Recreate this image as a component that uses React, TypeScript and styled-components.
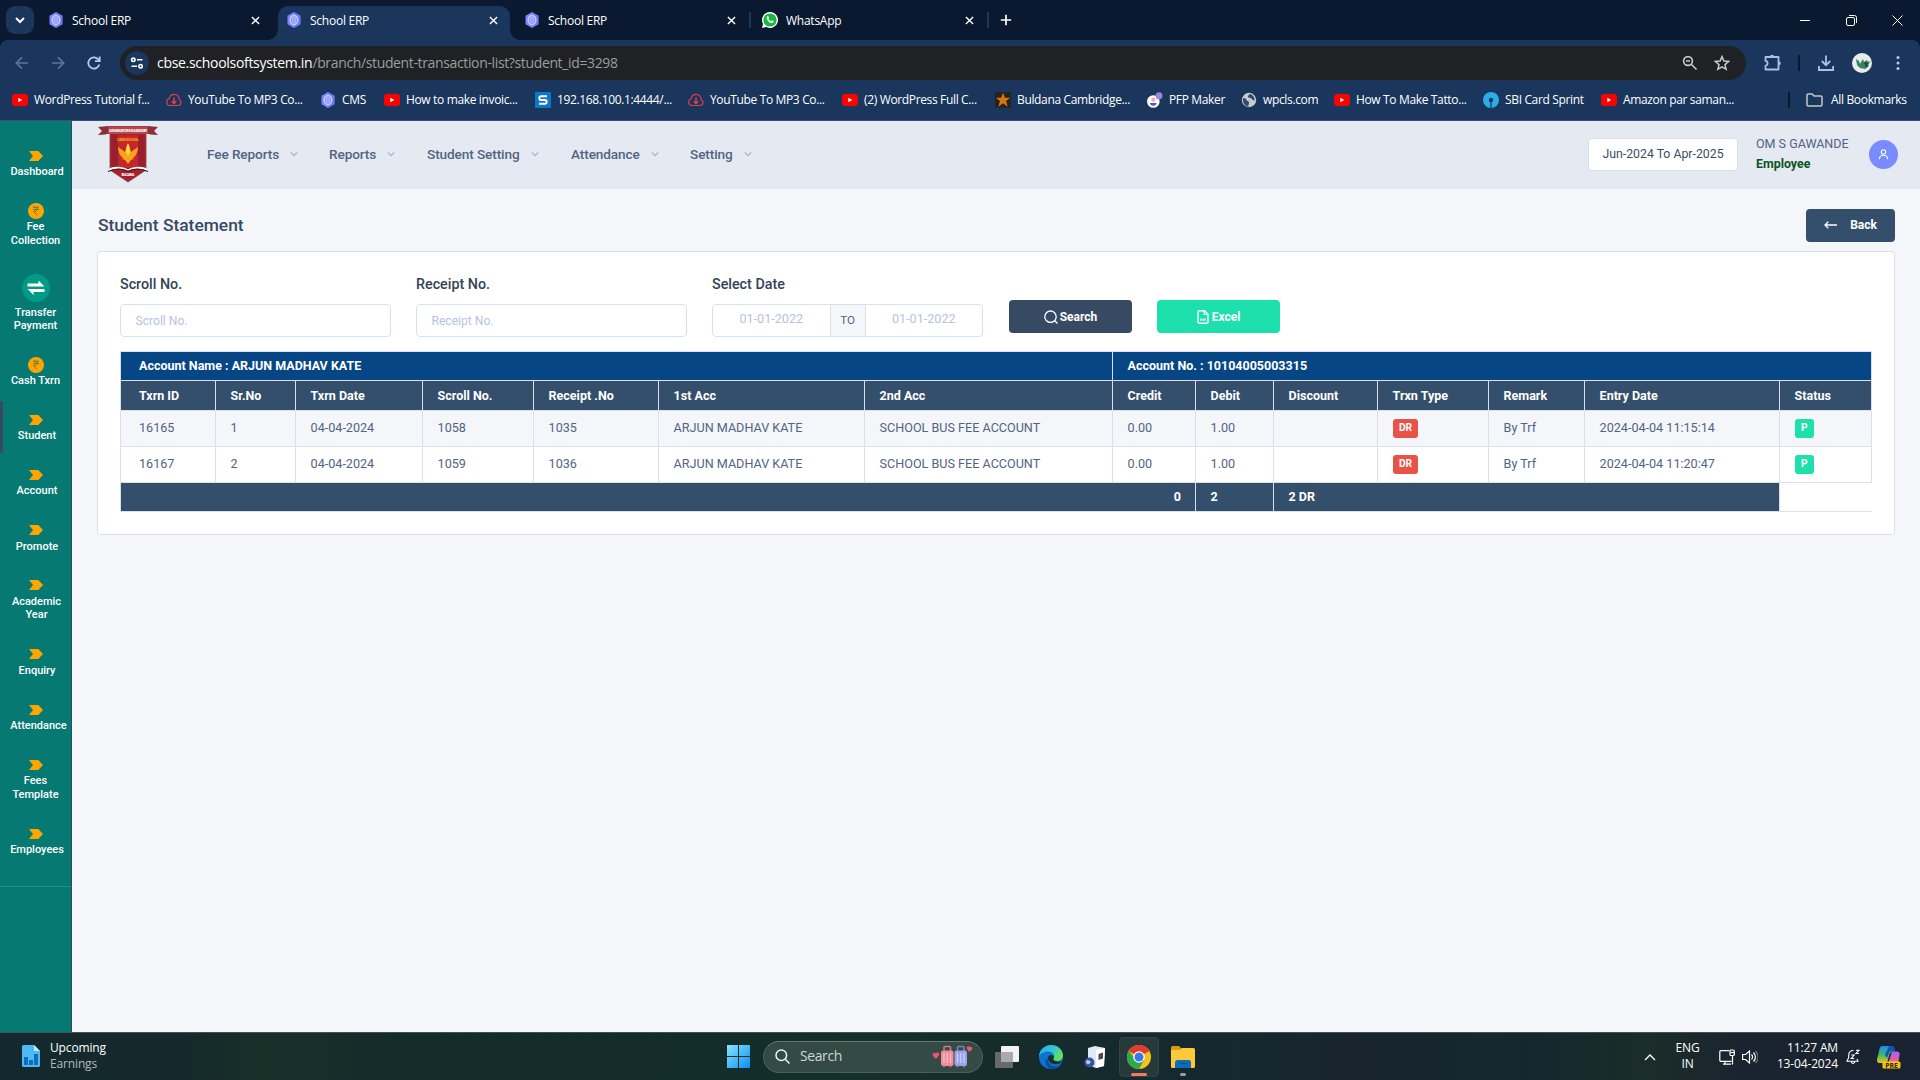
import React from "react";
import styled, { createGlobalStyle } from "styled-components";

const ui = `"Open Sans", "Noto Sans", sans-serif`;
const page = `Roboto, "Liberation Sans", sans-serif`;

const Global = createGlobalStyle`
  *, *::before, *::after { box-sizing: border-box; }
  html, body { margin: 0; padding: 0; background: #f5f6fa; }
  svg { display: block; flex: none; }
`;

const Screen = styled.div`
  width: 1920px;
  height: 1080px;
  display: flex;
  flex-direction: column;
  overflow: hidden;
  font-family: ${page};
`;

/* ---------- browser chrome ---------- */

const TabStrip = styled.div`
  flex: none;
  height: 40px;
  display: flex;
  align-items: flex-end;
  background: #0a1930;
  padding-left: 6px;
  font-family: ${ui};
`;

const TabSearch = styled.div`
  width: 28px;
  height: 28px;
  margin: 0 6px 6px 0;
  border-radius: 9px;
  background: #1a365d;
  display: grid;
  place-items: center;
`;

const Tab = styled.div<{ $active?: boolean; $divider?: boolean }>`
  position: relative;
  width: 238px;
  height: 34px;
  display: flex;
  align-items: center;
  padding: 0 18px 0 8px;
  color: #fff;

  &::before {
    content: "";
    position: absolute;
    inset: 0 6px 0 0;
    border-radius: 10px 10px 0 0;
    background: ${(p) => (p.$active ? "#1a365d" : "transparent")};
  }
  &::after {
    content: "";
    display: ${(p) => (p.$divider ? "block" : "none")};
    position: absolute;
    right: 3px;
    top: 6px;
    width: 2px;
    height: 16px;
    background: #1a365d;
  }
`;

const TabFoot = styled.span<{ $side: "left" | "right" }>`
  position: absolute;
  bottom: 0;
  ${(p) => (p.$side === "left" ? "left: -10px;" : "right: -4px;")}
  width: 10px;
  height: 10px;
  background: radial-gradient(circle at ${(p) => (p.$side === "left" ? "0 0" : "100% 0")}, transparent 9.5px, #1a365d 10px);
`;

const TabInner = styled.div`
  position: relative;
  flex: 1;
  display: flex;
  align-items: center;
  gap: 8px;
  padding-bottom: 6px;
  height: 28px;
`;

const TabTitle = styled.span`
  flex: 1;
  font-size: 12px;
  letter-spacing: -0.25px;
  line-height: 16px;
  padding-top: 1px;
`;

const NewTab = styled.div`
  height: 34px;
  padding: 8px 0 0 8px;
`;

const WindowButtons = styled.div`
  margin-left: auto;
  height: 40px;
  display: flex;
  > div {
    width: 46px;
    display: grid;
    place-items: center;
  }
`;

const Toolbar = styled.div`
  flex: none;
  height: 46px;
  display: flex;
  align-items: center;
  padding-left: 14px;
  background: #0a1930;
  font-family: ${ui};
  position: relative;
  &::before {
    content: "";
    position: absolute;
    inset: 0;
    background: #1a365d;
    border-radius: 8px 8px 0 0;
  }
  > * { position: relative; }
`;

const NavButton = styled.div`
  flex: none;
  width: 36px;
`;

const Omnibox = styled.div`
  flex: none;
  width: 1626px;
  height: 34px;
  margin-left: -2px;
  border-radius: 17px;
  background: #202124;
  display: flex;
  align-items: center;
  padding: 0 16px 0 5px;
`;

const SiteInfo = styled.div`
  width: 24px;
  height: 24px;
  border-radius: 50%;
  background: #1a365d;
  display: grid;
  place-items: center;
  margin-right: 8px;
`;

const Url = styled.div`
  flex: 1;
  padding-bottom: 1px;
  font-size: 14px;
  letter-spacing: -0.36px;
  color: #9a9da1;
  b { font-weight: 400; color: #fff; letter-spacing: -0.3px; }
`;

const OmniIcons = styled.div`
  display: flex;
  gap: 16px;
`;

const Tools = styled.div`
  display: flex;
  align-items: center;
  margin-left: 18px;
`;

const Divider = styled.div`
  flex: none;
  width: 2px;
  height: 16px;
  background: #0a1930;
`;

const ToolDivider = styled(Divider)`
  margin: 0 18px 0 16px;
`;

const Profile = styled.div`
  flex: none;
  width: 20px;
  height: 20px;
  border-radius: 50%;
  overflow: hidden;
  margin: 0 24px 0 18px;
  background: #e8ecea;
`;

const Bookmarks = styled.div`
  flex: none;
  height: 35px;
  display: flex;
  padding: 6px 0 0 12px;
  background: #1a365d;
  border-bottom: 1px solid #34507a;
  color: #fff;
  font-family: ${ui};
`;

const Bookmark = styled.div<{ $w: number }>`
  flex: none;
  width: ${(p) => p.$w}px;
  height: 16px;
  display: flex;
  align-items: center;
  gap: 6px;
  white-space: nowrap;
`;

const BookmarkText = styled.span<{ $ls?: number }>`
  font-size: 12px;
  line-height: 16px;
  letter-spacing: ${(p) => p.$ls ?? -0.35}px;
`;

const AllBookmarks = styled.div`
  display: flex;
  align-items: center;
  height: 16px;
  margin-left: 55px;
  gap: 8px;
  white-space: nowrap;
  ${Divider} { margin-right: 8px; }
`;

/* ---------- application ---------- */

const Body = styled.div`
  flex: 1;
  min-height: 0;
  display: flex;
`;

const Sidebar = styled.nav`
  flex: none;
  width: 72px;
  padding-top: 30px;
  background: #067972;
  border-right: 1px solid #2c4a66;
  display: flex;
  flex-direction: column;
`;

const SideItem = styled.div<{ $h: number; $active?: boolean }>`
  position: relative;
  flex: none;
  height: ${(p) => p.$h}px;
  display: flex;
  flex-direction: column;
  align-items: center;
  &::before {
    content: "";
    display: ${(p) => (p.$active ? "block" : "none")};
    position: absolute;
    left: 0;
    top: -14px;
    width: 3px;
    height: 52px;
    background: #364a63;
    border-radius: 0 2px 2px 0;
  }
`;

const SideLabel = styled.div<{ $lh: number; $gap: number; $dx?: number }>`
  margin-top: ${(p) => p.$gap + 1}px;
  padding-left: ${(p) => p.$dx ?? 0}px;
  font-size: 11px;
  font-weight: 500;
  line-height: ${(p) => p.$lh}px;
  color: #fff;
  text-align: center;
  white-space: nowrap;
`;

const SideRule = styled.div`
  height: 1px;
  background: #2b8a86;
`;

const Main = styled.main`
  flex: 1;
  min-width: 0;
  background: #f5f6fa;
`;

const Header = styled.header`
  height: 68px;
  background: #e5e9f2;
  display: flex;
  align-items: center;
  padding: 0 22px 2px 26px;
`;

const Logo = styled.div``;

const Menu = styled.div`
  display: flex;
  margin-left: 49px;
`;

const MenuItem = styled.div<{ $w: number }>`
  width: ${(p) => p.$w}px;
  display: flex;
  align-items: center;
  gap: 11px;
  font-size: 13.6px;
  letter-spacing: -0.1px;
  font-weight: 500;
  color: #526484;
  white-space: nowrap;
`;

const Session = styled.div`
  margin-left: auto;
  width: 150px;
  height: 33px;
  border: 1px solid #dbdfea;
  border-radius: 4px;
  background: #fff;
  display: grid;
  place-items: center;
  font-size: 12.3px;
  color: #3c4d62;
`;

const User = styled.div`
  width: 113px;
  margin-left: 18px;
  padding-bottom: 1px;
  font-size: 12.5px;
  line-height: 20px;
  color: #526484;
  white-space: nowrap;
  strong { display: block; font-weight: 700; font-size: 12.4px; color: #0b5523; }
`;

const Avatar = styled.div`
  width: 29px;
  height: 29px;
  border-radius: 50%;
  background: #798bff;
  display: grid;
  place-items: center;
`;

const Content = styled.div`
  padding: 20px 25px 0;
`;

const TitleRow = styled.div`
  display: flex;
  justify-content: space-between;
  height: 42px;
`;

const Title = styled.h1`
  margin: 0;
  padding-left: 1px;
  font-size: 17.4px;
  line-height: 32px;
  font-weight: 500;
  color: #364a63;
`;

const Button = styled.div<{ $bg: string; $w: number; $gap: number; $up?: number }>`
  width: ${(p) => p.$w}px;
  height: 33px;
  border-radius: 4px;
  background: ${(p) => p.$bg};
  color: #fff;
  font-size: 12px;
  font-weight: 700;
  display: flex;
  align-items: center;
  justify-content: center;
  gap: ${(p) => p.$gap}px;
  padding-bottom: ${(p) => p.$up ?? 0}px;
`;

const Card = styled.section`
  width: 1798px;
  height: 284px;
  background: #fff;
  border: 1px solid #dbdfea;
  border-radius: 4px;
  padding: 22px;
`;

const Filters = styled.div`
  display: flex;
  height: 77px;
`;

const Field = styled.div`
  width: 271px;
  margin-right: 25px;
`;

const Label = styled.label`
  display: block;
  font-size: 14.3px;
  font-weight: 500;
  line-height: 20px;
  margin-bottom: 10px;
  color: #344357;
`;

const Input = styled.div`
  height: 33px;
  border: 1px solid #dbdfea;
  border-radius: 4px;
  padding: 0 14.5px;
  font-size: 12.1px;
  line-height: 32px;
  color: #b7c2e0;
`;

const DateRange = styled(Input)`
  display: flex;
  padding: 0;
  font-size: 12.6px;
  text-align: center;
  line-height: 28px;
  span { flex: 1; }
  em {
    font-style: normal;
    font-size: 11.6px;
    width: 36px;
    line-height: 31px;
    background: #f5f6fa;
    border: solid #dbdfea;
    border-width: 0 1px;
    color: #526484;
  }
`;

const Actions = styled.div`
  display: flex;
  gap: 25px;
  padding-top: 26px;
  margin-left: 1px;
`;

const Table = styled.table`
  width: 1752px;
  table-layout: fixed;
  border-collapse: separate;
  border-spacing: 0;
  border-top: 1px solid #dbdfea;
`;

const Cell = styled.td<{ $right?: boolean; $blank?: boolean }>`
  padding: 0 14px 1px 14.6px;
  border: solid #dbdfea;
  border-width: 0 1px 1px 0;
  text-align: ${(p) => (p.$right ? "right" : "left")};
  white-space: nowrap;
  &:first-child { padding-left: 18px; border-left-width: 1px; }
  ${(p) => p.$blank && "background: #fff; border-right-width: 0;"}
`;

const Row = styled.tr<{ $h: number; $bg?: string; $head?: boolean }>`
  height: ${(p) => p.$h}px;
  background: ${(p) => p.$bg ?? "#fff"};
  font-weight: ${(p) => (p.$head ? 700 : 400)};
  font-size: ${(p) => (p.$head ? 12.5 : 12.6)}px;
  color: ${(p) => (p.$head ? "#fff" : "#526484")};
  ${Cell} { padding-bottom: ${(p) => (p.$head ? 1 : 3)}px; }
`;

const Badge = styled.span<{ $bg: string }>`
  display: inline-block;
  height: 19px;
  padding: 0 6px;
  border-radius: 3px;
  background: ${(p) => p.$bg};
  color: #fff;
  font-size: 10.2px;
  font-weight: 700;
  line-height: 17px;
  vertical-align: middle;
  margin: 2px 0 0 0.4px;
`;

/* ---------- taskbar ---------- */

const Taskbar = styled.div`
  flex: none;
  height: 48px;
  display: flex;
  align-items: center;
  border-top: 1px solid #45524f;
  background: linear-gradient(90deg, #14292d 0, #15292c 180px, #182f28 260px, #142b2c 420px, #132d2b 700px, #152f28 900px, #15292e 1150px, #18252f 1350px, #15282c 1560px, #1b2d28 1640px, #1a2430 1740px, #192231 100%);
  color: #fff;
  font-family: ${ui};
  font-size: 12px;
  line-height: 16px;
`;

const Widget = styled.div`
  flex: none;
  width: 727px;
  display: flex;
  align-items: center;
  gap: 10px;
  padding: 0 0 1px 22px;
  letter-spacing: -0.15px;
  small { display: block; font-size: 12px; color: #b3babb; }
`;

const SearchBox = styled.div`
  width: 220px;
  height: 32px;
  margin-left: 13px;
  border-radius: 16px;
  border: 1px solid #4b5f5a;
  border-top-color: #667671;
  background: #344a45;
  display: flex;
  align-items: center;
  padding: 0 9px 0 11px;
  color: #cfd6d4;
  font-size: 14px;
  letter-spacing: -0.4px;
  span { flex: 1; padding: 0 0 1px 10px; }
`;

const Apps = styled.div`
  display: flex;
  align-items: center;
  margin-left: 2px;
`;

const AppButton = styled.div<{ $open?: boolean; $mark?: string; $mw?: number }>`
  position: relative;
  width: 40px;
  height: 40px;
  margin: 0 2px;
  display: grid;
  place-items: center;
  border-radius: 4px;
  background: ${(p) => (p.$open ? "#263a3b" : "transparent")};
  border: 1px solid ${(p) => (p.$open ? "#2f4344" : "transparent")};
  &::after {
    content: "";
    position: absolute;
    bottom: 0;
    left: 50%;
    width: ${(p) => p.$mw ?? 0}px;
    height: 3px;
    border-radius: 2px;
    transform: translateX(-50%);
    background: ${(p) => p.$mark ?? "transparent"};
  }
`;

const Tray = styled.div`
  margin-left: auto;
  display: flex;
  align-items: center;
  padding-right: 19px;
`;

const TrayText = styled.div<{ $w: number; $right?: boolean }>`
  width: ${(p) => p.$w}px;
  text-align: ${(p) => (p.$right ? "right" : "center")};
  letter-spacing: -0.15px;
  padding-bottom: 1px;
`;

const TrayIcon = styled.div<{ $before: number }>`
  margin-left: ${(p) => p.$before}px;
`;

/* ---------- icons ---------- */

const Gem = () => (
  <svg width="16" height="16" viewBox="0 0 16 16">
    <path d="M8 0l6.500 3.800v8.400L8 16l-6.500-3.800V3.800z" fill="#7b86fb" />
    <path d="M8 0l6.500 3.800v8.400L8 16z" fill="#5f6af0" opacity=".5" />
    <ellipse cx="8" cy="8" rx="4.600" ry="5.400" fill="#c3c9ff" />
    <path d="M5.600 11V7a2.400 2.400 0 014.800 0v4M7.200 12V7.200a.8.8 0 011.600 0V12" fill="none" stroke="#7580f6" strokeWidth=".8" />
  </svg>
);

const YouTube = () => (
  <svg width="16" height="16" viewBox="0 0 16 16">
    <rect x="0" y="2" width="16" height="12" rx="3" fill="#f00" />
    <path d="M6.300 5.700v4.600L10.300 8z" fill="#fff" />
  </svg>
);

const CloudDown = () => (
  <svg width="16" height="16" viewBox="0 0 16 16" fill="none" stroke="#e23d4c" strokeWidth="1.200">
    <path d="M4 13.500h8a3 3 0 003-3c0-1.500-.7-2.400-1.800-2.800C13.400 4.500 11 2.300 8.300 2.300S3.600 4 3.300 6.500C1.700 7 .8 8.300.8 10A3.400 3.400 0 004 13.500z" />
    <path d="M8 5.500v6M5.800 9.300L8 11.600l2.200-2.300" strokeWidth="1.500" />
  </svg>
);

const SBox = () => (
  <svg width="16" height="16" viewBox="0 0 16 16">
    <rect width="16" height="16" fill="#0b77c5" />
    <path d="M12 4.200H6a1.600 1.600 0 00-1.600 1.600v.6A1.600 1.600 0 006 8h4a1.600 1.600 0 011.600 1.600v.6a1.600 1.600 0 01-1.600 1.600H4" fill="none" stroke="#fff" strokeWidth="2" />
  </svg>
);

const StarBox = () => (
  <svg width="16" height="16" viewBox="0 0 16 16">
    <rect width="16" height="16" fill="#262422" />
    <path d="M8 .8l1.900 5h5.300L11 9l1.700 5.700L8 11.300l-4.700 3.400L5 9 .8 5.800h5.300z" fill="#d8760a" />
  </svg>
);

const Pfp = () => (
  <svg width="16" height="16" viewBox="0 0 16 16">
    <circle cx="6.300" cy="9.500" r="6.300" fill="#fff" />
    <circle cx="12" cy="3.700" r="3.500" fill="#9a84dc" />
    <circle cx="6.300" cy="7.700" r="2.100" fill="#f6a5b0" />
    <path d="M3 11h6.600a3.300 2.800 0 01-6.600 0z" fill="#5b50e6" />
  </svg>
);

const Globe = () => (
  <svg width="16" height="16" viewBox="0 0 16 16">
    <circle cx="8" cy="8" r="7.200" fill="#c6cbd0" />
    <path d="M2 6.500c2-.5 3 .2 3.500 1.500s2 1 2.500 2-1 2.500-.5 4.500C4 14 1.500 11 2 6.500zM8.500 2c-.5 1.500-2 1.500-1.500 3s2.500.5 3.500 1.500 1 2 3 2c.5-2-1-6-5-6.500z" fill="#31486b" />
  </svg>
);

const Sbi = () => (
  <svg width="16" height="16" viewBox="0 0 16 16">
    <circle cx="8" cy="8" r="8" fill="#2aace6" />
    <circle cx="8" cy="8" r="2.200" fill="#1a365d" />
    <path d="M7.400 9h1.200v7H7.400z" fill="#1a365d" />
  </svg>
);

const WhatsApp = () => (
  <svg width="16" height="16" viewBox="0 0 16 16">
    <path d="M8 0a8 8 0 11-3.700 15.100L0 16l1-4.100A8 8 0 018 0z" fill="#fff" />
    <circle cx="8" cy="8" r="6.600" fill="#16b83e" />
    <path d="M5.300 4.300c.5-.5 1-.3 1.200.2l.5 1.200c0 .5-.7.8-.6 1.100.5 1.100 1.400 1.900 2.500 2.400.4 0 .8-1 1.200-.9l1.400.8c.5.300.2 1.300-.5 1.700-1.300.7-3.200 0-4.600-1.400S4 5.700 5.300 4.300z" fill="#fff" />
  </svg>
);

const Close = () => (
  <svg width="9" height="9" viewBox="0 0 9 9" stroke="#fff" strokeWidth="1.400">
    <path d="M.9.9l7.200 7.200M8.100.9L.9 8.100" />
  </svg>
);

const Chev = ({ c = "#9fb0cc", w = 8, s = 1.1 }: { c?: string; w?: number; s?: number }) => (
  <svg width={w} height={w} viewBox="0 0 8 8" fill="none" stroke={c} strokeWidth={s}>
    <path d="M.8 2.400L4 5.600l3.200-3.200" />
  </svg>
);

const Arrow = ({ flip }: { flip?: boolean }) => (
  <svg width="16" height="16" viewBox="0 0 16 16" fill="none" stroke="#5f7699" strokeWidth="1.700">
    {flip ? <path d="M2 8h11.500M8 2.300L13.700 8 8 13.700" /> : <path d="M14 8H2.500M8 2.300L2.300 8 8 13.700" />}
  </svg>
);

const Pointer = () => (
  <svg width="14" height="10" viewBox="0 0 14 10">
    <path d="M0 0h9.300L14 5l-4.700 5H0l4-5z" fill="#ffa500" />
  </svg>
);

const Coin = () => (
  <svg width="16" height="16" viewBox="0 0 16 16">
    <circle cx="8" cy="8" r="8" fill="#ffa500" />
    <path d="M5.200 4.200h5.800M5.200 6.400h5.800M5.200 4.200h1.700c3 0 3 4.200 0 4.200H5.400L9.300 12.300" fill="none" stroke="#5f7d4e" strokeWidth="1" />
  </svg>
);

const Transfer = () => (
  <svg width="28" height="28" viewBox="0 0 28 28">
    <circle cx="14" cy="14" r="14" fill="#009b86" />
    <path d="M5.500 9.500h11V6.500l6 6h-17zM22.500 18h-11v3l-6-6h17z" fill="#fff" />
  </svg>
);

const Crest = () => (
  <svg width="60" height="57" viewBox="0 0 60 57">
    <path d="M12 7h36v37L30 56 12 44z" fill="#a81f2a" stroke="#7a4a46" strokeWidth=".8" />
    <path d="M14 9h32v33H14z" fill="#c4262f" />
    <path d="M14 9h6v33h-6zM40 9h6v33h-6z" fill="#98202a" />
    <path d="M0 1l10-1h40l10 1-4 4 4 4-8-.5V8H8v.5L0 9l4-4z" fill="#8d2f37" />
    <path d="M10 .5h40V8H10z" fill="#b5494c" />
    <text x="30" y="5.800" textAnchor="middle" fontSize="4.200" fontWeight="700" fill="#fff" textLength="38" fontFamily="Roboto">SANSKAR DNYA MANDIR</text>
    <text x="30" y="15.200" textAnchor="middle" fontSize="4.400" fontWeight="700" fill="#f6a21a" textLength="22" fontFamily="Roboto">CBSE SCHOOL</text>
    <path d="M20 21l7 5 1.500-5 1.500-4 1.500 4 1.500 5 7-5c-.5 7-3 10-6 11.500h3l-4 1.500-3 4-3-4-4-1.500h3c-3-1.500-5.500-4.500-6-11.500z" fill="#f9a51c" />
    <path d="M29 18.500h2l1 7-2 5-2-5z" fill="#ffd93c" />
    <path d="M10 45c7-3.500 15-3.500 20 0 5-3.500 13-3.500 20 0l-2-3c-6-2-13-1.500-18 1.500C25 40.500 18 40 12 42z" fill="#fff" />
    <path d="M10 45.500c7-3 15-3 20 0 5-3 13-3 20 0" fill="none" stroke="#222" strokeWidth="1.200" />
    <text x="30" y="50.300" textAnchor="middle" fontSize="3.600" fontWeight="700" fill="#fff" textLength="13" fontFamily="Roboto">BULDANA</text>
  </svg>
);

const Edge = () => (
  <svg width="24" height="24" viewBox="0 0 24 24">
    <defs>
      <linearGradient id="edgeTop" x1="0" y1="0" x2="1" y2=".6">
        <stop offset="0" stopColor="#2aa8e8" />
        <stop offset=".6" stopColor="#35c9c9" />
        <stop offset="1" stopColor="#6be04e" />
      </linearGradient>
    </defs>
    <circle cx="12" cy="12" r="12" fill="#0f73cf" />
    <path d="M0 11C1 4 6 0 12 0c7 0 12 5 12 10.500 0 3.500-2.500 5.500-5.500 5.500-3 0-4.500-1-4.500-2s1-1.500 1-3c0-2.500-2.500-4.500-6-4.500S1.500 8 0 11z" fill="url(#edgeTop)" />
    <path d="M8.500 13c-.5 5 4 9 9 8.500 2-.2 3.500-1.200 4.700-2.300C20 22.500 16.500 24 13 24 8 23 6 19 6.500 15.500c.2-1.500 1-2 2-2.500z" fill="#0b4f9e" />
    <path d="M9 13c0-2 1.500-3 3-3 2 0 3 1 3 2 0 .8-.7 1-.7 2 0 1.500 2 2.500 4.500 2.500 1.500 0 2.700-.4 3.700-1-.3 1-.6 2-1 2.500C15 21 9 18 9 13z" fill="#14332d" />
  </svg>
);

const Chrome = () => (
  <svg width="24" height="24" viewBox="0 0 24 24">
    <circle cx="12" cy="12" r="12" fill="#fbc116" />
    <path d="M12 12L1.600 6A12 12 0 0122.400 6z" fill="#e33b2e" />
    <path d="M1.600 6A12 12 0 0012 24l5.200-9L12 12H6.800z" fill="#2da94f" />
    <circle cx="12" cy="12" r="5.800" fill="#fff" />
    <circle cx="12" cy="12" r="4.500" fill="#3b78e7" />
  </svg>
);

const Bags = () => (
  <svg width="41" height="24" viewBox="0 0 41 24">
    <g fill="none" strokeWidth="1.600">
      <path d="M12 6V2.500a1 1 0 011-1h4.500a1 1 0 011 1V6" stroke="#d47788" />
      <path d="M25.500 6V2.500a1 1 0 011-1H31a1 1 0 011 1V6" stroke="#7d83b8" />
    </g>
    <rect x="9" y="5.500" width="12.500" height="15.500" rx="2" fill="#f58a98" />
    <rect x="22.500" y="5.500" width="12.500" height="15.500" rx="2" fill="#9aa2ee" />
    <path d="M12 8v10M15.200 8v10M18.500 8v10" stroke="#fcc3c4" strokeWidth="1.200" />
    <path d="M25.500 8v10M28.700 8v10M32 8v10" stroke="#ccd1ff" strokeWidth="1.200" />
    <path d="M11 21.500h2M17.500 21.500h2M24.500 21.500h2M31 21.500h2" stroke="#8b7d92" strokeWidth="1.500" />
    <path d="M4 14L.8 10.800a2 2 0 013-2.500 2 2 0 013.400 2z" fill="#f0507a" />
    <path d="M37 7l-2-3a1.700 1.700 0 012.800-2 1.700 1.700 0 012.200 2.500z" fill="#f0507a" />
  </svg>
);

/* ---------- data ---------- */

const bookmarks: [React.FC, string, number][] = [
  [YouTube, "WordPress Tutorial f...", 154],
  [CloudDown, "YouTube To MP3 Co...", 154],
  [Gem, "CMS", 64],
  [YouTube, "How to make invoic...", 151],
  [SBox, "192.168.100.1:4444/...", 153],
  [CloudDown, "YouTube To MP3 Co...", 154],
  [YouTube, "(2) WordPress Full C...", 153],
  [StarBox, "Buldana Cambridge...", 152],
  [Pfp, "PFP Maker", 94],
  [Globe, "wpcls.com", 93],
  [YouTube, "How To Make Tatto...", 149],
  [Sbi, "SBI Card Sprint", 118],
  [YouTube, "Amazon par saman...", 132],
];

type Side = { icon: React.FC; lines: string[]; h: number; gap: number; lh: number; dx?: number; active?: boolean };
const side: Side[] = [
  { icon: Pointer, lines: ["Dashboard"], h: 52, gap: 3, lh: 14, dx: 3 },
  { icon: Coin, lines: ["Fee", "Collection"], h: 71, gap: 0, lh: 14 },
  { icon: Transfer, lines: ["Transfer", "Payment"], h: 83, gap: 3, lh: 13 },
  { icon: Coin, lines: ["Cash Txrn"], h: 58, gap: 0, lh: 14 },
  { icon: Pointer, lines: ["Student"], h: 55, gap: 3, lh: 14, dx: 3, active: true },
  { icon: Pointer, lines: ["Account"], h: 55, gap: 3, lh: 14, dx: 3 },
  { icon: Pointer, lines: ["Promote"], h: 55, gap: 4, lh: 14, dx: 3 },
  { icon: Pointer, lines: ["Academic", "Year"], h: 69, gap: 4, lh: 13, dx: 2 },
  { icon: Pointer, lines: ["Enquiry"], h: 56, gap: 4, lh: 14, dx: 3 },
  { icon: Pointer, lines: ["Attendance"], h: 55, gap: 3, lh: 14, dx: 6 },
  { icon: Pointer, lines: ["Fees", "Template"], h: 69, gap: 3, lh: 14 },
  { icon: Pointer, lines: ["Employees"], h: 57, gap: 3, lh: 14, dx: 3 },
];

const menu: [string, number][] = [
  ["Fee Reports", 122],
  ["Reports", 98],
  ["Student Setting", 144],
  ["Attendance", 119],
  ["Setting", 80],
];

const colWidths = [96, 80, 127, 111, 125, 206, 248, 83, 78, 104, 111, 96, 195, 92];
const heads = ["Txrn ID", "Sr.No", "Txrn Date", "Scroll No.", "Receipt .No", "1st Acc", "2nd Acc", "Credit", "Debit", "Discount", "Trxn Type", "Remark", "Entry Date", "Status"];
const rows = [
  ["16165", "1", "04-04-2024", "1058", "1035", "ARJUN MADHAV KATE", "SCHOOL BUS FEE ACCOUNT", "0.00", "1.00", "", "DR", "By Trf", "2024-04-04 11:15:14", "P"],
  ["16167", "2", "04-04-2024", "1059", "1036", "ARJUN MADHAV KATE", "SCHOOL BUS FEE ACCOUNT", "0.00", "1.00", "", "DR", "By Trf", "2024-04-04 11:20:47", "P"],
];

export default function App() {
  return (
    <Screen>
      <Global />
      <TabStrip>
        <TabSearch><Chev c="#fff" w={10} s={1.6} /></TabSearch>
        <Tab><TabInner><Gem /><TabTitle>School ERP</TabTitle><Close /></TabInner></Tab>
        <Tab $active>
          <TabFoot $side="left" /><TabFoot $side="right" />
          <TabInner><Gem /><TabTitle>School ERP</TabTitle><Close /></TabInner>
        </Tab>
        <Tab $divider><TabInner><Gem /><TabTitle>School ERP</TabTitle><Close /></TabInner></Tab>
        <Tab $divider><TabInner><WhatsApp /><TabTitle>WhatsApp</TabTitle><Close /></TabInner></Tab>
        <NewTab>
          <svg width="12" height="12" viewBox="0 0 12 12" stroke="#fff" strokeWidth="1.700"><path d="M6 .8v10.400M.8 6h10.400" /></svg>
        </NewTab>
        <WindowButtons>
          <div><svg width="10" height="10" viewBox="0 0 10 10" stroke="#fff"><path d="M0 5.500h10" /></svg></div>
          <div>
            <svg width="11" height="11" viewBox="0 0 11 11" fill="none" stroke="#fff">
              <rect x=".5" y="2.500" width="8" height="8" rx="1.500" /><path d="M3 .5h5.500a2 2 0 012 2V8" />
            </svg>
          </div>
          <div><svg width="11" height="11" viewBox="0 0 11 11" stroke="#fff"><path d="M.5.5l10 10M10.500.5l-10 10" /></svg></div>
        </WindowButtons>
      </TabStrip>

      <Toolbar>
        <NavButton><Arrow /></NavButton>
        <NavButton><Arrow flip /></NavButton>
        <NavButton>
          <svg width="16" height="16" viewBox="0 0 16 16" fill="none" stroke="#b7cdf0" strokeWidth="1.800">
            <path d="M13.300 9.500A5.600 5.600 0 1112 4.200L13.500 5.800" /><path d="M13.700 1.500v4.600H9" />
          </svg>
        </NavButton>
        <Omnibox>
          <SiteInfo>
            <svg width="14" height="14" viewBox="0 0 14 14" fill="none" stroke="#fff" strokeWidth="1.600">
              <circle cx="3.300" cy="3.800" r="1.700" /><path d="M7 3.800h5.500M1.500 10.200H7" /><circle cx="10.600" cy="10.200" r="1.700" />
            </svg>
          </SiteInfo>
          <Url><b>cbse.schoolsoftsystem.in</b>/branch/student-transaction-list?student_id=3298</Url>
          <OmniIcons>
            <svg width="16" height="16" viewBox="0 0 16 16" fill="none" stroke="#c7c9cc" strokeWidth="1.600">
              <circle cx="6" cy="6" r="4.400" /><path d="M9.300 9.300l5.200 5.200M4 6h4" />
            </svg>
            <svg width="16" height="16" viewBox="0 0 16 16" fill="none" stroke="#c7c9cc" strokeWidth="1.500">
              <path d="M8 1.600l1.900 4.500 4.700.4L11 9.600l1.100 4.700L8 11.800l-4.100 2.500L5 9.600 1.400 6.500l4.700-.4z" />
            </svg>
          </OmniIcons>
        </Omnibox>
        <Tools>
          <svg width="18" height="18" viewBox="0 0 18 18" fill="none" stroke="#a9c1ea" strokeWidth="1.800">
            <path d="M1.500 3H14.500V15.500H1.500V11.800C4.300 11.400 4.300 7.200 1.500 6.800z" strokeLinejoin="round" />
            <path d="M5.900 2.800a2.100 2.100 0 014.200 0zM14.700 7.200a2.100 2.100 0 010 4.200z" fill="#a9c1ea" stroke="none" />
          </svg>
          <ToolDivider />
          <svg width="16" height="16" viewBox="0 0 16 16" fill="none" stroke="#a9c1ea" strokeWidth="1.800">
            <path d="M8 .5v9.500M3.800 6L8 10.200 12.200 6M.9 11v4h14.200v-4" />
          </svg>
          <Profile>
            <svg width="20" height="20" viewBox="0 0 20 20">
              <path d="M4 6l3 2 1 3 1-2 2-3 1 3 3-2 1 2 3-1-3 3 1 2-4 3-5-1-3-3z" fill="#3d7f60" />
              <path d="M12 9l5 1-3 5z" fill="#1f4a38" />
            </svg>
          </Profile>
          <svg width="4" height="16" viewBox="0 0 4 16" fill="#b7cdf0"><circle cx="2" cy="2.500" r="1.500" /><circle cx="2" cy="8" r="1.500" /><circle cx="2" cy="13.500" r="1.500" /></svg>
        </Tools>
      </Toolbar>

      <Bookmarks>
        {bookmarks.map(([Icon, text, w], i) => (
          <Bookmark key={i} $w={w}><Icon /><BookmarkText>{text}</BookmarkText></Bookmark>
        ))}
        <AllBookmarks>
          <Divider />
          <svg width="17" height="14" viewBox="0 0 17 14" fill="none" stroke="#c6c6c6" strokeWidth="1.500">
            <path d="M1 2.200A1.200 1.200 0 012.200 1h4l1.800 2h6.800A1.200 1.200 0 0116 4.200v7.600a1.200 1.200 0 01-1.200 1.200H2.200A1.200 1.200 0 011 11.800z" />
          </svg>
          <BookmarkText $ls={-0.33}>All Bookmarks</BookmarkText>
        </AllBookmarks>
      </Bookmarks>

      <Body>
        <Sidebar>
          {side.map((s, i) => (
            <SideItem key={i} $h={s.h} $active={s.active}>
              <s.icon />
              <SideLabel $lh={s.lh} $gap={s.gap} $dx={s.dx}>
                {s.lines.map((l) => <div key={l}>{l}</div>)}
              </SideLabel>
            </SideItem>
          ))}
          <SideRule />
        </Sidebar>

        <Main>
          <Header>
            <Logo><Crest /></Logo>
            <Menu>
              {menu.map(([m, w]) => <MenuItem key={m} $w={w}>{m}<Chev /></MenuItem>)}
            </Menu>
            <Session>Jun-2024 To Apr-2025</Session>
            <User>OM S GAWANDE<strong>Employee</strong></User>
            <Avatar>
              <svg width="11" height="11" viewBox="0 0 11 11" fill="none" stroke="#fff" strokeWidth="1.100">
                <circle cx="5.500" cy="3" r="2.200" /><path d="M1.300 10.300C1.500 7.500 3 6.300 5.500 6.300s4 1.200 4.200 4" />
              </svg>
            </Avatar>
          </Header>

          <Content>
            <TitleRow>
              <Title>Student Statement</Title>
              <Button $bg="#344f6b" $w={89} $gap={13} $up={2}>
                <svg width="13" height="8" viewBox="0 0 13 8" fill="none" stroke="#fff" strokeWidth="1.300">
                  <path d="M13 4H1M4.300.8L1 4l3.300 3.200" />
                </svg>
                Back
              </Button>
            </TitleRow>

            <Card>
              <Filters>
                <Field><Label>Scroll No.</Label><Input>Scroll No.</Input></Field>
                <Field><Label>Receipt No.</Label><Input>Receipt No.</Input></Field>
                <Field>
                  <Label>Select Date</Label>
                  <DateRange><span>01-01-2022</span><em>TO</em><span>01-01-2022</span></DateRange>
                </Field>
                <Actions>
                  <Button $bg="#364a63" $w={123} $gap={2}>
                    <svg width="14" height="14" viewBox="0 0 14 14" fill="none" stroke="#fff" strokeWidth="1.300">
                      <circle cx="6.500" cy="6.700" r="5.700" /><path d="M10.800 10.800l2.700 2.700" />
                    </svg>
                    Search
                  </Button>
                  <Button $bg="#1ee0ac" $w={123} $gap={3}>
                    <svg width="12" height="14" viewBox="0 0 12 14" fill="none" stroke="#fff" strokeWidth="1.400">
                      <path d="M1 2a1.200 1.200 0 011.200-1.200H7.500L11 4.300V12a1.200 1.200 0 01-1.200 1.200H2.200A1.200 1.200 0 011 12z" />
                      <path d="M7.200 1v3.500h3.600" strokeWidth="1.200" /><path d="M3 9.700h6" strokeWidth="2.200" strokeDasharray="1.600 .5" opacity=".8" />
                    </svg>
                    Excel
                  </Button>
                </Actions>
              </Filters>

              <Table>
                <colgroup>{colWidths.map((w, i) => <col key={i} width={w} />)}</colgroup>
                <tbody>
                  <Row $h={29} $bg="#064685" $head>
                    <Cell colSpan={7}>Account Name : ARJUN MADHAV KATE</Cell>
                    <Cell colSpan={7}>Account No. : 10104005003315</Cell>
                  </Row>
                  <Row $h={30} $bg="#344f6b" $head>
                    {heads.map((h) => <Cell key={h}>{h}</Cell>)}
                  </Row>
                  {rows.map((r, i) => (
                    <Row key={i} $h={36} $bg={i === 0 ? "#f5f6fa" : "#fff"}>
                      {r.map((c, j) => (
                        <Cell key={j}>
                          {c === "DR" ? <Badge $bg="#e85347">DR</Badge> : c === "P" ? <Badge $bg="#1ee0ac">P</Badge> : c}
                        </Cell>
                      ))}
                    </Row>
                  ))}
                  <Row $h={29} $bg="#344f6b" $head>
                    <Cell colSpan={8} $right>0</Cell>
                    <Cell>2</Cell>
                    <Cell colSpan={4}>2 DR</Cell>
                    <Cell $blank />
                  </Row>
                </tbody>
              </Table>
            </Card>
          </Content>
        </Main>
      </Body>

      <Taskbar>
        <Widget>
          <svg width="18" height="22" viewBox="0 0 18 22">
            <path d="M1.500 0H12l6 6v14.500a1.500 1.500 0 01-1.500 1.500h-15A1.500 1.500 0 010 20.500v-19A1.500 1.500 0 011.500 0z" fill="#4cb9f2" />
            <path d="M12 0l6 6h-6z" fill="#c4ecff" />
            <path d="M2 12h4v8H2zM7 15h4v5H7zM12 9h4v11h-4z" fill="#0f6cbf" />
          </svg>
          <div>Upcoming<small>Earnings</small></div>
        </Widget>
        <svg width="23" height="23" viewBox="0 0 23 23">
          <defs><linearGradient id="win" x1="0" y1="0" x2="1" y2="1"><stop offset="0" stopColor="#8be4fd" /><stop offset="1" stopColor="#0a8ff2" /></linearGradient></defs>
          <path d="M0 0h11v11H0zM12 0h11v11H12zM0 12h11v11H0zM12 12h11v11H12z" fill="url(#win)" />
        </svg>
        <SearchBox>
          <svg width="15" height="15" viewBox="0 0 15 15" fill="none" stroke="#f0f3f2" strokeWidth="1.500">
            <circle cx="6.300" cy="6.300" r="5.300" /><path d="M10.300 10.300l4.200 4.200" />
          </svg>
          <span>Search</span>
          <Bags />
        </SearchBox>
        <Apps>
          <AppButton>
            <svg width="24" height="22" viewBox="0 0 24 22">
              <rect x="6" y="0" width="18" height="16" rx="1" fill="#f2f2f2" />
              <rect x="0" y="6" width="18" height="16" rx="1" fill="#666b6a" />
              <rect x="6" y="6" width="12" height="10" fill="#a9abab" />
            </svg>
          </AppButton>
          <AppButton><Edge /></AppButton>
          <AppButton>
            <svg width="22" height="24" viewBox="0 0 22 24">
              <path d="M4 3l7-2 10 2-1 18-8 2-8-3z" fill="#dfe9f5" /><path d="M12 5l9-2-1 18-8 2z" fill="#fff" />
              <path d="M14.500 9l4.500-1.500v6l-4.500 1.500z" fill="#474747" /><circle cx="5.500" cy="17.500" r="5" fill="#35539f" />
              <path d="M2 16c2-2 3 0 4 0s1 2-1 3-3-1-3-3z" fill="#b9c8e4" />
            </svg>
          </AppButton>
          <AppButton $open $mark="#f47b62" $mw={16}><Chrome /></AppButton>
          <AppButton $mark="#98a0a3" $mw={6}>
            <svg width="24" height="22" viewBox="0 0 24 22">
              <path d="M0 1.500A1.500 1.500 0 011.500 0H8l2.500 2.500V6H0z" fill="#d89a08" />
              <path d="M0 4h9l2-2h11.500A1.500 1.500 0 0124 3.500v17a1.500 1.500 0 01-1.500 1.500h-21A1.500 1.500 0 010 20.500z" fill="#fdc93a" />
              <path d="M4 22v-5.500A2.500 2.500 0 016.500 14h11a2.500 2.500 0 012.500 2.500V22z" fill="#0c6dbd" />
              <path d="M8 17.500h8" stroke="#0a4f92" strokeWidth="1.400" />
            </svg>
          </AppButton>
        </Apps>
        <Tray>
          <svg width="12" height="8" viewBox="0 0 12 8" fill="none" stroke="#fff" strokeWidth="1.400"><path d="M1 7l5-5 5 5" /></svg>
          <TrayText $w={63}>ENG<br />IN</TrayText>
          <svg width="16" height="16" viewBox="0 0 16 16" fill="none" stroke="#fff" strokeWidth="1.200">
            <path d="M10 1.700H2A1.200 1.200 0 00.8 2.900v8.300a1.200 1.200 0 001.200 1.200h10.500M6 12.400v2.800M4 15.200h8M13.500 7v8.500" />
            <rect x="11" y="1" width="4.300" height="5.500" rx="1" /><path d="M11.500 3.500h3.500" />
          </svg>
          <TrayIcon $before={7}>
            <svg width="16" height="16" viewBox="0 0 16 16" fill="none" stroke="#fff" strokeWidth="1.200">
              <path d="M.6 5.500v5h3L7.500 14V2L3.600 5.500z" /><path d="M9.500 5.500a3.500 3.500 0 010 5M11.500 3.500a6.300 6.300 0 010 9" />
              <path d="M13.500 2a8.500 8.500 0 010 12" opacity=".35" />
            </svg>
          </TrayIcon>
          <TrayText $w={80} $right>11:27 AM<br />13-04-2024</TrayText>
          <TrayIcon $before={8}>
            <svg width="14" height="16" viewBox="0 0 14 16" fill="none" stroke="#fff" strokeWidth="1.100">
              <path d="M7.500 1.500C4.200 1.500 2.700 4 2.700 6.500v2L1 12.300h11l-1-2.300M5.200 12.500c.3 2.500 3.300 2.500 3.600 0" />
              <path d="M5.200 6h3l-3 3.500h3M10 1.200h3L10 4.500h3" />
            </svg>
          </TrayIcon>
          <TrayIcon $before={17}>
            <svg width="24" height="24" viewBox="0 0 24 24">
              <defs>
                <linearGradient id="cpA" x1="0" y1="0" x2="0" y2="1"><stop offset="0" stopColor="#1a8ff0" /><stop offset=".5" stopColor="#3cb371" /><stop offset="1" stopColor="#f0c418" /></linearGradient>
                <linearGradient id="cpB" x1="0" y1="0" x2="0" y2="1"><stop offset="0" stopColor="#9b6df5" /><stop offset=".6" stopColor="#e757a8" /><stop offset="1" stopColor="#f79552" /></linearGradient>
              </defs>
              <path d="M5 1h9c2 0 3 1 3.500 3L18 6c-4 0-5 2-6 5l-1.500 5c-.5 1.500-1.500 2-3 2H3c-2.500 0-3.500-2-2.800-4.500L2.500 4C3 2 4 1 5 1z" fill="url(#cpA)" />
              <path d="M12 1h2c2 0 3 1 3.500 3L18 6h-3c-2 0-3 1-3.500 3L10 13l-2-3z" fill="#1452b8" />
              <path d="M15 6.500h4.500c2.500 0 3.500 1.500 3 4L21 19H11z" fill="url(#cpB)" />
              <rect x="5.500" y="16.500" width="18" height="7" rx="1.500" fill="#fcc50c" />
              <text x="14.500" y="22.500" textAnchor="middle" fontSize="6.800" fontWeight="700" fill="#222" fontFamily="Open Sans">PRE</text>
            </svg>
          </TrayIcon>
        </Tray>
      </Taskbar>
    </Screen>
  );
}
